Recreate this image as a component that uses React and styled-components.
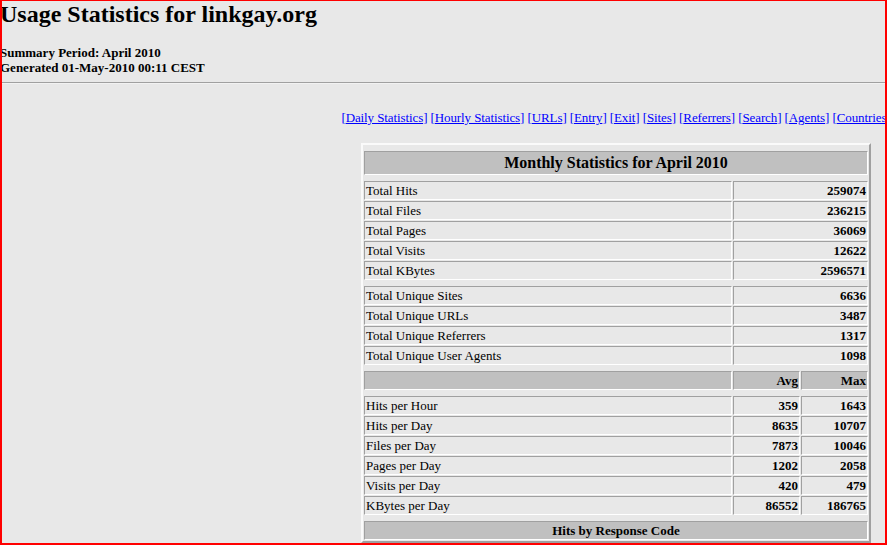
import React from "react";
import styled, { createGlobalStyle } from "styled-components";

const GlobalStyle = createGlobalStyle`
  html, body {
    margin: 0;
    padding: 0;
    background: #e8e8e8;
    overflow: hidden;
  }
  body {
    font-family: "Liberation Serif", "Times New Roman", serif;
    color: #000;
  }
`;

const Frame = styled.div`
  position: fixed;
  inset: 0;
  border: 2px solid #ff0000;
  border-top-width: 1px;
  pointer-events: none;
  z-index: 10;
`;

const Page = styled.div`
  width: 1232px;
  padding-top: 1px;
`;

const Title = styled.h2`
  margin: 0;
  font-size: 24px;
  line-height: 27px;
  font-weight: bold;
`;

const Summary = styled.div`
  margin-top: 17px;
  font-size: 13px;
  line-height: 15px;
  font-weight: bold;
`;

const Rule = styled.hr`
  margin: 7px 0 0;
  height: 0;
  border: 0;
  border-top: 1px solid #a0a0a0;
  border-bottom: 1px solid #f2f2f2;
`;

const Nav = styled.nav`
  margin-top: 26px;
  text-align: center;
  font-size: 13px;
  line-height: 15px;
  letter-spacing: -0.1px;
  white-space: nowrap;
`;

const NavLink = styled.a`
  color: #0000ff;
  text-decoration: underline;
`;

const Table = styled.table`
  margin: 18px auto 0;
  width: 510px;
  table-layout: fixed;
  border-collapse: separate;
  border-spacing: 1px;
  border: 2px solid;
  border-color: #fafafa #a0a0a0 #a0a0a0 #fafafa;
`;

const Cell = styled.td`
  padding: 1px;
  border: 1px solid;
  border-color: #a0a0a0 #ffffff #ffffff #a0a0a0;
  font-size: 13px;
  line-height: 15px;
  text-align: ${(p) => (p.$right ? "right" : "left")};
  font-weight: ${(p) => (p.$bold ? "bold" : "normal")};
  white-space: nowrap;
  overflow: hidden;
`;

const HeadCell = styled.th`
  padding: 1px;
  border: 1px solid;
  border-color: #a0a0a0 #ffffff #ffffff #a0a0a0;
  background: #c0c0c0;
  font-weight: bold;
  font-size: ${(p) => (p.$big ? "16px" : "13px")};
  line-height: ${(p) => (p.$big ? "20px" : "15px")};
  text-align: ${(p) => p.$align || "center"};
  white-space: nowrap;
`;

const GapCell = styled.td`
  height: 4px;
  padding: 0;
  border: 0;
`;

const links = [
  "Daily Statistics",
  "Hourly Statistics",
  "URLs",
  "Entry",
  "Exit",
  "Sites",
  "Referrers",
  "Search",
  "Agents",
  "Countries",
];

const totals = [
  ["Total Hits", "259074"],
  ["Total Files", "236215"],
  ["Total Pages", "36069"],
  ["Total Visits", "12622"],
  ["Total KBytes", "2596571"],
];

const uniques = [
  ["Total Unique Sites", "6636"],
  ["Total Unique URLs", "3487"],
  ["Total Unique Referrers", "1317"],
  ["Total Unique User Agents", "1098"],
];

const perDay = [
  ["Hits per Hour", "359", "1643"],
  ["Hits per Day", "8635", "10707"],
  ["Files per Day", "7873", "10046"],
  ["Pages per Day", "1202", "2058"],
  ["Visits per Day", "420", "479"],
  ["KBytes per Day", "86552", "186765"],
];

const Gap = () => (
  <tr>
    <GapCell colSpan={3} />
  </tr>
);

export default function App() {
  return (
    <>
      <GlobalStyle />
      <Frame />
      <Page>
        <Title>Usage Statistics for linkgay.org</Title>
        <Summary>
          Summary Period: April 2010
          <br />
          Generated 01-May-2010 00:11 CEST
        </Summary>
        <Rule />
        <Nav>
          {links.map((l, i) => (
            <React.Fragment key={l}>
              {i > 0 && " "}
              <NavLink href="#">[{l}]</NavLink>
            </React.Fragment>
          ))}
        </Nav>
        <Table>
          <colgroup>
            <col style={{ width: 368 }} />
            <col style={{ width: 67 }} />
            <col style={{ width: 67 }} />
          </colgroup>
          <tbody>
            <Gap />
            <tr>
              <HeadCell colSpan={3} $big>
                Monthly Statistics for April 2010
              </HeadCell>
            </tr>
            <Gap />
            {totals.map(([k, v]) => (
              <tr key={k}>
                <Cell>{k}</Cell>
                <Cell colSpan={2} $right $bold>
                  {v}
                </Cell>
              </tr>
            ))}
            <Gap />
            {uniques.map(([k, v]) => (
              <tr key={k}>
                <Cell>{k}</Cell>
                <Cell colSpan={2} $right $bold>
                  {v}
                </Cell>
              </tr>
            ))}
            <Gap />
            <tr>
              <HeadCell $align="left" />
              <HeadCell $align="right">Avg</HeadCell>
              <HeadCell $align="right">Max</HeadCell>
            </tr>
            <Gap />
            {perDay.map(([k, a, m]) => (
              <tr key={k}>
                <Cell>{k}</Cell>
                <Cell $right $bold>
                  {a}
                </Cell>
                <Cell $right $bold>
                  {m}
                </Cell>
              </tr>
            ))}
            <Gap />
            <tr>
              <HeadCell colSpan={3}>Hits by Response Code</HeadCell>
            </tr>
          </tbody>
        </Table>
      </Page>
    </>
  );
}
